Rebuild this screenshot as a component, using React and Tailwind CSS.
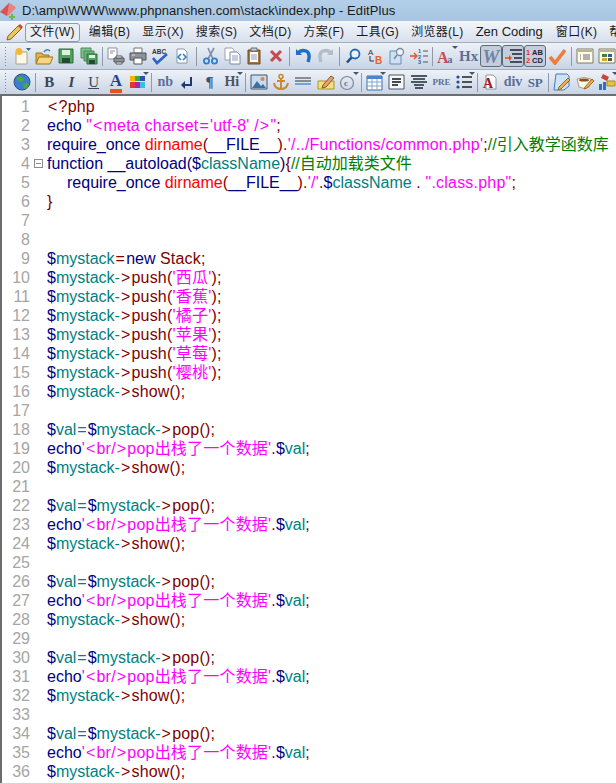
import React from "react";

const KW = "text-[#000080]";
const VAR = "text-[#008080]";
const FN = "text-[#ff0000]";
const STR = "text-[#ff00ff] tracking-[0.2px]";
const OP = "text-[#800000] tracking-[0.2px]";
const CM = "text-[#008000]";
const INDENT = "inline-block w-[20px]";

const t = (c, s) => ({ c, s });
const pushLine = (fruit) => [
  t(KW, "$"), t(VAR, "mystack-"), t(OP, ">push("), t(STR, `'${fruit}'`), t(OP, ");"),
];
const showLine = [t(KW, "$"), t(VAR, "mystack-"), t(OP, ">show();")];
const popLine = [
  t(KW, "$"), t(VAR, "val="), t(KW, "$"), t(VAR, "mystack-"), t(OP, ">pop();"),
];
const echoLine = [
  t(KW, "echo"), t(STR, "'<br/>pop出栈了一个数据'"), t(OP, "."), t(KW, "$"), t(VAR, "val"), t(OP, ";"),
];

const lines = [
  [t(OP, "<?php")],
  [t(KW, "echo "), t(STR, "\"<meta charset='utf-8' />\""), t(OP, ";")],
  [
    t(KW, "require_once "), t(FN, "dirname"), t(OP, "("), t(KW, "__FILE__"), t(OP, ")."),
    t(STR, "'/../Functions/common.php'"), t(OP, ";"), t(CM, "//引入教学函数库"),
  ],
  [
    t(KW, "function __autoload("), t(KW, "$"), t(VAR, "className"), t(KW, ")"), t(OP, "{"), t(CM, "//自动加载类文件"),
  ],
  [
    t(INDENT, ""), t(KW, "require_once "), t(FN, "dirname"), t(OP, "("), t(KW, "__FILE__"), t(OP, ")."),
    t(STR, "'/'"), t(OP, "."), t(KW, "$"), t(VAR, "className"), t(OP, " . "), t(STR, "\".class.php\""), t(OP, ";"),
  ],
  [t(OP, "}")],
  [],
  [],
  [t(KW, "$"), t(VAR, "mystack"), t(OP, "="), t(KW, "new "), t(OP, "Stack;")],
  pushLine("西瓜"),
  pushLine("香蕉"),
  pushLine("橘子"),
  pushLine("苹果"),
  pushLine("草莓"),
  pushLine("樱桃"),
  showLine,
  [],
  popLine, echoLine, showLine, [],
  popLine, echoLine, showLine, [],
  popLine, echoLine, showLine, [],
  popLine, echoLine, showLine, [],
  popLine, echoLine, showLine,
];

const menus = ["文件(W)", "编辑(B)", "显示(X)", "搜索(S)", "文档(D)", "方案(F)", "工具(G)", "浏览器(L)", "Zen Coding", "窗口(K)", "帮助(H)"];

function Ico({ children }) {
  return (
    <svg width="18" height="18" viewBox="0 0 18 18" fill="none">
      {children}
    </svg>
  );
}

const Doc = ({ fill = "#fff" }) => (
  <path d="M4 2h7l3 3v11H4z" fill={fill} stroke="#8a96a6" />
);

const icons = {
  newfile: (
    <Ico>
      <path d="M3 5h11v12H3z" fill="#fbf8e8" stroke="#a9a48e" />
      <circle cx="6" cy="4.5" r="3.5" fill="#f7b733" />
      <path d="M13 1h5l-2.5 3z" fill="#3b5f8f" />
    </Ico>
  ),
  open: (
    <Ico>
      <path d="M1 6h6l1 2h6v8H1z" fill="#e3b34c" stroke="#9a7520" />
      <path d="M4 10h14l-3 7H1z" fill="#f6d67f" stroke="#9a7520" />
      <path d="M9 5q3-4 6-1" stroke="#3f7fc0" strokeWidth="1.5" />
    </Ico>
  ),
  save: (
    <Ico>
      <path d="M2 2h14v14H2z" fill="#4fa35f" stroke="#2c6e3c" />
      <path d="M5 3h8v5H5z" fill="#dff0e0" />
      <path d="M5 11h8v5H5z" fill="#254a33" />
    </Ico>
  ),
  saveall: (
    <Ico>
      <path d="M1 1h10v10H1z" fill="#7fc08c" stroke="#4e8a5c" />
      <path d="M4 4h10v10H4z" fill="#6bb27a" stroke="#4e8a5c" />
      <path d="M7 7h10v10H7z" fill="#4fa35f" stroke="#2c6e3c" />
      <path d="M9 8h6v3H9z" fill="#dff0e0" />
      <path d="M9 13h6v4H9z" fill="#254a33" />
    </Ico>
  ),
  preview: (
    <Ico>
      <path d="M1 1h9v11H1z" fill="#fff" stroke="#8a8f98" />
      <path d="M3 4h5M3 6h3" stroke="#8a8f98" />
      <path d="M7 11h10v4H7z" fill="#8f949c" stroke="#555" />
      <path d="M9 9h6v2H9zM9 15h6v2H9z" fill="#fff" stroke="#555" />
    </Ico>
  ),
  print: (
    <Ico>
      <path d="M5 1h8v5H5z" fill="#fff" stroke="#777" />
      <path d="M1 6h16v7H1z" fill="#8d939c" stroke="#4f545c" />
      <path d="M5 11h8v6H5z" fill="#fff" stroke="#555" />
      <path d="M3 8h3" stroke="#dfe3e8" />
    </Ico>
  ),
  spell: (
    <Ico>
      <text x="1" y="6.5" fontSize="6.5" fontWeight="700" fontFamily="Liberation Sans" fill="#333">ABC</text>
      <path d="M2 11l4 5L16 7" stroke="#2d62c4" strokeWidth="2.6" />
    </Ico>
  ),
  html: (
    <Ico>
      <Doc />
      <path d="M8 7l-3 3 3 3" stroke="#2f80d0" strokeWidth="1.6" />
      <path d="M10 7l3 3-3 3" stroke="#2f80d0" strokeWidth="1.6" />
    </Ico>
  ),
  cut: (
    <Ico>
      <path d="M13 1L7 12M7 1l5 11" stroke="#7d8ea8" strokeWidth="1.6" />
      <circle cx="5.5" cy="14" r="2.6" stroke="#2f7fd0" strokeWidth="1.8" />
      <circle cx="13.5" cy="14" r="2.6" stroke="#2f7fd0" strokeWidth="1.8" />
    </Ico>
  ),
  copy: (
    <Ico>
      <path d="M2 1h7l2 2v10H2z" fill="#fff" stroke="#9aa3ae" />
      <path d="M7 5h7l3 3v9H7z" fill="#fff" stroke="#7a8aa0" />
      <path d="M9 9h6M9 11h6M9 13h6" stroke="#8a9bb5" />
    </Ico>
  ),
  paste: (
    <Ico>
      <path d="M3 3h12v14H3z" fill="#a8743a" stroke="#6e4a22" />
      <path d="M5 5h8v10H5z" fill="#fff" />
      <path d="M6 1h6v3H6z" fill="#c9ccd2" stroke="#6d6d6d" />
      <path d="M6 8h6M6 10h6M6 12h6" stroke="#8a9bb5" />
    </Ico>
  ),
  del: (
    <Ico>
      <path d="M4 4l10 10M14 4L4 14" stroke="#c24a4a" strokeWidth="3" />
    </Ico>
  ),
  undo: (
    <Ico>
      <path d="M2 2v6h6" fill="#1f6fc4" />
      <path d="M3 7q4-5 9-3t2 11" stroke="#1f6fc4" strokeWidth="3.4" />
    </Ico>
  ),
  redo: (
    <Ico>
      <path d="M16 2v6h-6" fill="#b3bdc9" />
      <path d="M15 7q-4-5-9-3t-2 11" stroke="#b3bdc9" strokeWidth="3.4" />
    </Ico>
  ),
  find: (
    <Ico>
      <circle cx="11" cy="7" r="4.5" fill="#e8f2fc" stroke="#2a68b0" strokeWidth="1.8" />
      <path d="M7.5 10.5L3 15.5" stroke="#1f4f8f" strokeWidth="2.6" />
    </Ico>
  ),
  replace: (
    <Ico>
      <text x="2" y="8" fontSize="8" fontFamily="Liberation Sans" fill="#334">A</text>
      <text x="9" y="17" fontSize="10" fontWeight="700" fontFamily="Liberation Sans" fill="#e8632a">B</text>
      <path d="M4 9v5h4" stroke="#334" />
    </Ico>
  ),
  findfile: (
    <Ico>
      <path d="M2 4h11v13H2z" fill="#cfe0f2" stroke="#5f8fc0" />
      <circle cx="12" cy="5" r="3.5" fill="#eef5fc" stroke="#7a8aa0" strokeWidth="1.3" />
      <path d="M9 8l-3 4" stroke="#7a8aa0" strokeWidth="1.6" />
    </Ico>
  ),
  numlist: (
    <Ico>
      <path d="M0 9h6" stroke="#e0532a" strokeWidth="1.6" />
      <path d="M4 6l3 3-3 3" stroke="#e0532a" strokeWidth="1.4" />
      <text x="8" y="6" fontSize="5.5" fontWeight="700" fontFamily="Liberation Sans" fill="#2a5fa0">1</text>
      <text x="8" y="11.5" fontSize="5.5" fontWeight="700" fontFamily="Liberation Sans" fill="#2a5fa0">2</text>
      <text x="8" y="17" fontSize="5.5" fontWeight="700" fontFamily="Liberation Sans" fill="#2a5fa0">3</text>
      <path d="M13 4h5M13 9h5M13 15h5" stroke="#555" />
    </Ico>
  ),
  font: (
    <Ico>
      <text x="0" y="16" fontSize="16" fontWeight="700" fontFamily="Liberation Serif" fill="#c0504d">A</text>
      <text x="10" y="16" fontSize="11" fontWeight="700" fontFamily="Liberation Serif" fill="#5c6f96">a</text>
    </Ico>
  ),
  indent: (
    <Ico>
      <path d="M6 3h12M8 7h10M10 11h8M6 15h12" stroke="#223" strokeWidth="1.3" />
      <path d="M1 11h6" stroke="#e0532a" strokeWidth="1.6" />
      <path d="M5 8l3 3-3 3" fill="#e0532a" />
    </Ico>
  ),
  ab12: (
    <Ico>
      <text x="0" y="8" fontSize="7.5" fontWeight="700" fontFamily="Liberation Sans" fill="#d93a1e">1</text>
      <text x="0" y="16" fontSize="7.5" fontWeight="700" fontFamily="Liberation Sans" fill="#d93a1e">2</text>
      <text x="6" y="8" fontSize="7.5" fontWeight="700" fontFamily="Liberation Sans" fill="#223">AB</text>
      <text x="6" y="16" fontSize="7.5" fontWeight="700" fontFamily="Liberation Sans" fill="#223">CD</text>
    </Ico>
  ),
  check: (
    <Ico>
      <path d="M2 10l5 6L17 3" stroke="#ee7d3b" strokeWidth="3.6" />
    </Ico>
  ),
  panel1: (
    <Ico>
      <path d="M1 2h16v14H1z" fill="#fffde8" stroke="#7a7a6a" />
      <path d="M2 3h14v2H2z" fill="#b6b68a" />
      <path d="M7 8h7M7 10h7M7 12h7M4 8h1M4 10h1M4 12h1" stroke="#667" />
    </Ico>
  ),
  panel2: (
    <Ico>
      <path d="M1 2h16v14H1z" fill="#fffde8" stroke="#7a7a6a" />
      <path d="M2 3h14v2H2z" fill="#b6b68a" />
      <path d="M4 7h5v3H4z" fill="#3b7f4b" />
      <path d="M10 7h4v3h-4z" fill="#2a5fa0" />
      <path d="M4 11h5v3H4z" fill="#d8a52a" />
      <path d="M10 11h4v3h-4z" fill="#555" />
    </Ico>
  ),
  globe: (
    <Ico>
      <circle cx="9" cy="9" r="8" fill="#3a7ed0" stroke="#27558f" />
      <path d="M3 6q3-4 6-2t1 4-4 0zM10 11q5-2 6 0-1 5-5 5z" fill="#4ea83c" />
    </Ico>
  ),
  colors: (
    <Ico>
      <path d="M1 3h5v5H1z" fill="#f5b400" />
      <path d="M6 3h5v5H6z" fill="#3aa843" />
      <path d="M11 3h5v5h-5z" fill="#3250b0" />
      <path d="M1 9h5v6H1z" fill="#e5352b" />
      <path d="M6 9h5v6H6z" fill="#9c27b0" />
      <path d="M11 9h5v6h-5z" fill="#35c0e0" />
    </Ico>
  ),
  ret: (
    <Ico>
      <path d="M13 4v8H6" stroke="#1f3a70" strokeWidth="2" />
      <path d="M7 8l-4 4 4 4z" fill="#1f3a70" />
    </Ico>
  ),
  image: (
    <Ico>
      <path d="M1 2h16v14H1z" fill="#c6dcf2" stroke="#44546a" />
      <path d="M2 15l5-7 4 5 2-2 3 4z" fill="#3f6f9f" />
      <circle cx="12.5" cy="6" r="2" fill="#e9812f" />
    </Ico>
  ),
  anchor: (
    <Ico>
      <circle cx="9" cy="3.5" r="2" stroke="#c98a2a" strokeWidth="1.6" />
      <path d="M9 5v11M5 8h8" stroke="#c98a2a" strokeWidth="2" />
      <path d="M2 10q1 6 7 6t7-6" stroke="#c98a2a" strokeWidth="2" />
    </Ico>
  ),
  hr: (
    <Ico>
      <path d="M1 5h16M1 8h16" stroke="#333" strokeWidth="1.2" />
      <path d="M1 11h16" stroke="#6fa5dc" strokeWidth="2" />
    </Ico>
  ),
  marker: (
    <Ico>
      <path d="M1 8h16v8H1z" fill="#f3e27a" stroke="#a8952c" />
      <path d="M6 12l8-9 3 2-8 9-4 1z" fill="#e9a06a" stroke="#8a5a2c" />
    </Ico>
  ),
  copyright: (
    <Ico>
      <circle cx="8" cy="10" r="6.5" stroke="#7d8796" strokeWidth="1.2" />
      <text x="5" y="13" fontSize="9" fontWeight="700" fontFamily="Liberation Serif" fill="#5c6f96">c</text>
    </Ico>
  ),
  table: (
    <Ico>
      <path d="M1 3h15v14H1z" fill="#fff" stroke="#3a6ea5" />
      <path d="M1 3h15v3H1z" fill="#4c86c6" />
      <path d="M1 9h15M1 13h15M6 6v11M11 6v11" stroke="#7ea6d0" />
    </Ico>
  ),
  alignbox: (
    <Ico>
      <path d="M1 2h15v14H1z" fill="#fff" stroke="#4b5563" />
      <path d="M2 3h13v12H2z" fill="#f4f7fb" />
      <path d="M4 6h9M4 9h9M4 12h6" stroke="#111" strokeWidth="1.3" />
    </Ico>
  ),
  center: (
    <Ico>
      <path d="M1 3h16M3 6h12M1 9h16M4 12h10M5 15h8" stroke="#1f2937" strokeWidth="1.4" />
    </Ico>
  ),
  bullets: (
    <Ico>
      <circle cx="3" cy="4" r="1.6" fill="#1f4f8f" />
      <circle cx="3" cy="9" r="1.6" fill="#1f4f8f" />
      <circle cx="3" cy="14" r="1.6" fill="#1f4f8f" />
      <path d="M7 4h10M7 9h10M7 14h10" stroke="#222" strokeWidth="1.3" />
    </Ico>
  ),
  adoc: (
    <Ico>
      <Doc />
      <text x="1" y="15" fontSize="14" fontWeight="700" fontFamily="Liberation Serif" fill="#9b1c1c">A</text>
    </Ico>
  ),
  docpen: (
    <Ico>
      <path d="M3 1h11l2 2v10l-5 4H1z" fill="#cfe3f7" stroke="#3f7fc0" />
      <path d="M6 14L15 5l2 2-9 9-3 1z" fill="#eeb04f" stroke="#9a6a20" />
    </Ico>
  ),
  cup: (
    <Ico>
      <path d="M1 6q7-3 14 0l-2 8q-5 3-10 0z" fill="#fbf6ea" stroke="#a99a7a" />
      <ellipse cx="8" cy="7" rx="5" ry="1.6" fill="#8a4f24" />
      <path d="M9 14l7-8 2 2-7 7-3 1z" fill="#eeb04f" stroke="#9a6a20" />
    </Ico>
  ),
  objs: (
    <Ico>
      <path d="M5 1l6 3-2 4-6-3z" fill="#c9443a" />
      <path d="M9 8h8v5H9z" fill="#e8c530" stroke="#a88a20" />
      <path d="M1 11h3v6H1zM5 9h3v8H5z" fill="#2e6fc9" />
    </Ico>
  ),
};

const Grip = () => (
  <div className="w-[11px] h-full flex flex-col justify-center items-center gap-[2px] shrink-0">
    {[0, 1, 2, 3, 4, 5, 6].map((i) => (
      <div key={i} className="w-[1px] h-[1px] bg-[#7b8798]" />
    ))}
  </div>
);

const Sep = () => (
  <div className="w-[5px] h-[19px] flex justify-center shrink-0">
    <div className="w-[1px] h-full bg-[#8f9bac]" />
  </div>
);

function Btn({ children, on, arrow }) {
  return (
    <div
      className={`relative w-[22.2px] h-[22px] flex items-center justify-center shrink-0 rounded-[3px] ${
        on ? "border border-[#5d6a7c] bg-[#c3cddb]" : ""
      }`}
    >
      {children}
      {arrow && (
        <div className="absolute right-[0px] top-[1px] w-0 h-0 border-l-[3px] border-r-[3px] border-t-[3px] border-l-transparent border-r-transparent border-t-[#44546a]" />
      )}
    </div>
  );
}

const Word = ({ children, cls }) => (
  <span className={`font-['Liberation_Serif'] leading-none ${cls}`}>{children}</span>
);

function Toolbar({ items, height }) {
  return (
    <div className={`${height} flex items-center bg-gradient-to-b from-[#eef2f8] to-[#c9d4e4] overflow-hidden`}>
      <Grip />
      {items.map((it, i) =>
        it === "|" ? (
          <Sep key={i} />
        ) : (
          <Btn key={i} on={it.on} arrow={it.arrow}>
            {it.word ? <Word cls={it.word}>{it.text}</Word> : icons[it.icon]}
          </Btn>
        )
      )}
    </div>
  );
}

const row1 = [
  { icon: "newfile" }, { icon: "open" }, { icon: "save" }, { icon: "saveall" }, "|",
  { icon: "preview" }, { icon: "print" }, { icon: "spell" }, { icon: "html" }, "|",
  { icon: "cut" }, { icon: "copy" }, { icon: "paste" }, { icon: "del" }, "|",
  { icon: "undo" }, { icon: "redo" }, "|",
  { icon: "find" }, { icon: "replace" }, { icon: "findfile" }, { icon: "numlist" }, "|",
  { icon: "font", arrow: true },
  { word: "text-[15px] font-bold text-[#5c6f96]", text: "Hx" },
  { on: true, word: "text-[19px] font-bold italic text-[#6f84a8]", text: "W" },
  { on: true, icon: "indent" },
  { on: true, icon: "ab12" },
  { icon: "check" }, "|",
  { icon: "panel1" }, { icon: "panel2" },
];

const row2 = [
  { icon: "globe" }, "|",
  { word: "text-[15px] font-bold text-[#3d4654]", text: "B" },
  { word: "text-[15px] font-bold italic text-[#3d4654]", text: "I" },
  { word: "text-[15px] underline text-[#3d4654]", text: "U" },
  { word: "text-[17px] font-bold text-[#27408b] border-b-[4px] border-[#f04e1e]", text: "A" },
  { icon: "colors", arrow: true }, "|",
  { word: "text-[14px] font-bold text-[#5c6f96]", text: "nb" },
  { icon: "ret" },
  { word: "text-[15px] font-bold text-[#3d5278]", text: "¶" },
  { word: "text-[14px] font-bold text-[#4a5568]", text: "Hi", arrow: true }, "|",
  { icon: "image" }, { icon: "anchor" }, { icon: "hr" }, { icon: "marker" }, { icon: "copyright", arrow: true }, "|",
  { icon: "table", arrow: true }, { icon: "alignbox" }, { icon: "center" },
  { word: "text-[9px] font-bold text-[#5c6f96]", text: "PRE" },
  { icon: "bullets", arrow: true }, "|",
  { icon: "adoc" },
  { word: "text-[14px] font-bold text-[#5c6f96]", text: "div" },
  { word: "text-[13px] font-bold text-[#4f6a96]", text: "SP" }, "|",
  { icon: "docpen" }, { icon: "cup" }, { icon: "objs", arrow: true },
];

function Token({ tok }) {
  return (
    <span className={tok.c}>
      {tok.s.split(/([<>=])/).map((part, k) =>
        part === "<" || part === ">" || part === "=" ? (
          <span key={k} className="mx-[1px]">{part}</span>
        ) : (
          part
        )
      )}
    </span>
  );
}

export default function App() {
  return (
    <div className="w-[616px] h-[783px] overflow-hidden flex flex-col bg-white font-['Liberation_Sans','Noto_Sans_CJK_SC',sans-serif]">
      {/* title bar */}
      <div className="h-[21px] shrink-0 flex items-center bg-gradient-to-b from-[#b4cfe8] to-[#a7c5e2] text-[13px] tracking-[0.06px] text-[#1a1a1a]">
        <svg width="18" height="18" viewBox="0 0 18 18" className="shrink-0">
          <path d="M0 10L9 1l6 4-8 9z" fill="#d9534f" />
          <path d="M9 1l6 4 1 1-8 8-1 0z" fill="#e9837f" />
          <path d="M11 12h2v2h2v2h-2v2h-2v-2H9v-2h2z" fill="#6dbb3a" />
        </svg>
        <span className="ml-[4px] whitespace-nowrap">D:\amp\WWW\www.phpnanshen.com\stack\index.php - EditPlus</span>
      </div>

      {/* menu */}
      <div className="h-[21px] shrink-0 flex items-center border-t border-[#f4f7fb] bg-gradient-to-b from-[#f2f5fa] to-[#d8e0ed] text-[12px] tracking-[0.3px] text-[#1a1a1a] overflow-hidden">
        <svg width="18" height="18" viewBox="0 0 18 18" className="ml-[6px] mr-[1px] shrink-0">
          <path d="M2 13L13 2l3 3L5 16l-4 1z" fill="#efc45c" stroke="#7d6a2a" />
          <path d="M12 3l3 3 2-2-3-3z" fill="#c9443a" />
        </svg>
        {menus.map((m, i) => (
          <div
            key={m}
            className={`h-[19px] flex items-center whitespace-nowrap shrink-0 rounded-[3px] ${
              i === 0
                ? "border border-[#8f9bac] bg-[#e9eef6] px-[4px] mr-[9px]"
                : m === "Zen Coding"
                ? "mr-[13px] text-[13px] tracking-normal"
                : "mr-[12px]"
            }`}
          >
            {m}
          </div>
        ))}
      </div>

      <div className="shrink-0 border-t border-[#a3adbb]">
        <Toolbar items={row1} height="h-[26px]" />
      </div>
      <div className="shrink-0 border-t border-[#a3adbb]">
        <Toolbar items={row2} height="h-[24px]" />
      </div>

      {/* editor */}
      <div className="flex-1 min-h-0 border-t-[2px] border-l-[2px] border-[#6d6d6d] pt-[1px] overflow-hidden">
        {lines.map((toks, i) => (
          <div key={i} className="h-[19px] flex items-center text-[16px] leading-[19px] whitespace-nowrap">
            <div className="w-[28px] text-right text-[#a5a5a5] shrink-0">{i + 1}</div>
            <div className="w-[17px] flex items-center justify-center shrink-0">
              {i === 3 && (
                <div className="w-[9px] h-[9px] border border-[#8c8c8c] flex items-center justify-center">
                  <div className="w-[5px] h-[1px] bg-[#8c8c8c]" />
                </div>
              )}
            </div>
            <div className="whitespace-pre">
              {toks.map((tok, j) => (
                <Token key={j} tok={tok} />
              ))}
            </div>
          </div>
        ))}
      </div>
    </div>
  );
}
